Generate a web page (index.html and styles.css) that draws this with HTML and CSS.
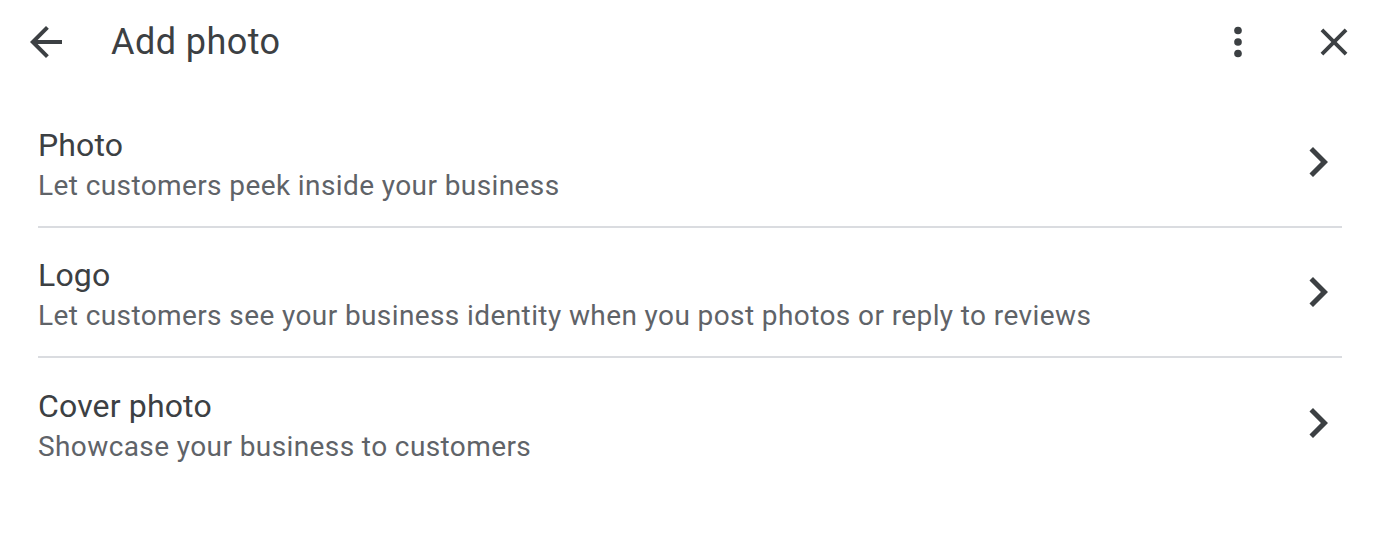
FILE: index.html
```html
<!DOCTYPE html>
<html>
<head>
<meta charset="utf-8">
<link rel="stylesheet" href="styles.css">
</head>
<body>
<div class="dialog">
  <header class="top">
    <button class="icon-btn back" aria-label="Back">
      <svg viewBox="0 0 24 24" width="48" height="48"><path d="M20 11H7.83l5.59-5.59L12 4l-8 8 8 8 1.41-1.41L7.83 13H20v-2z"/></svg>
    </button>
    <h1 class="title">Add photo</h1>
    <div class="spacer"></div>
    <button class="icon-btn more" aria-label="More">
      <svg viewBox="0 0 24 24" width="46" height="46"><circle cx="12" cy="6" r="2"/><circle cx="12" cy="12" r="2"/><circle cx="12" cy="18" r="2"/></svg>
    </button>
    <button class="icon-btn close" aria-label="Close">
      <svg viewBox="0 0 24 24" width="46" height="46"><path d="M19 6.41L17.59 5 12 10.59 6.41 5 5 6.41 10.59 12 5 17.59 6.41 19 12 13.41 17.59 19 19 17.59 13.41 12z"/></svg>
    </button>
  </header>
  <ul class="list">
    <li class="item">
      <div class="text">
        <div class="item-title">Photo</div>
        <div class="item-sub">Let customers peek inside your business</div>
      </div>
      <svg class="chev" viewBox="0 0 24 24" width="60" height="60"><path d="M10 6L8.59 7.41 13.17 12l-4.58 4.59L10 18l6-6z"/></svg>
    </li>
    <li class="item">
      <div class="text">
        <div class="item-title">Logo</div>
        <div class="item-sub">Let customers see your business identity when you post photos or reply to reviews</div>
      </div>
      <svg class="chev" viewBox="0 0 24 24" width="60" height="60"><path d="M10 6L8.59 7.41 13.17 12l-4.58 4.59L10 18l6-6z"/></svg>
    </li>
    <li class="item">
      <div class="text">
        <div class="item-title">Cover photo</div>
        <div class="item-sub">Showcase your business to customers</div>
      </div>
      <svg class="chev" viewBox="0 0 24 24" width="60" height="60"><path d="M10 6L8.59 7.41 13.17 12l-4.58 4.59L10 18l6-6z"/></svg>
    </li>
  </ul>
</div>
</body>
</html>
```
FILE: styles.css
```css
* { box-sizing: border-box; }
html, body { margin: 0; padding: 0; background: #fff; }
body { font-family: Roboto, "Liberation Sans", sans-serif; color: #3c4043; }
.dialog { width: 1378px; height: 534px; }
.top {
  display: flex;
  align-items: center;
  height: 84px;
  padding: 0 20px 0 22px;
}
.icon-btn {
  border: 0;
  background: none;
  padding: 0;
  display: flex;
  align-items: center;
  justify-content: center;
  fill: #3c4043;
}
.back { width: 48px; height: 48px; }
.title {
  margin: 0 0 0 41px;
  font-size: 36px;
  font-weight: 400;
  letter-spacing: 0.45px;
  color: #3c4043;
}
.spacer { flex: 1; }
.more { width: 48px; height: 48px; margin-right: 48px; }
.close { width: 48px; height: 48px; }
.list { list-style: none; margin: 0; padding: 14px 36px 0 38px; }
.item {
  display: flex;
  align-items: center;
  height: 130px;
  border-bottom: 2px solid #dadce0;
}
.item:last-child { border-bottom: 0; }
.text { flex: 1; padding-top: 8px; }
.item-title { font-size: 32px; line-height: 40px; letter-spacing: 0.15px; color: #3c4043; }
.item-sub { font-size: 28px; line-height: 42px; color: #5f6368; letter-spacing: 0.4px; }
.chev { fill: #3c4043; margin-right: -6px; }
```
